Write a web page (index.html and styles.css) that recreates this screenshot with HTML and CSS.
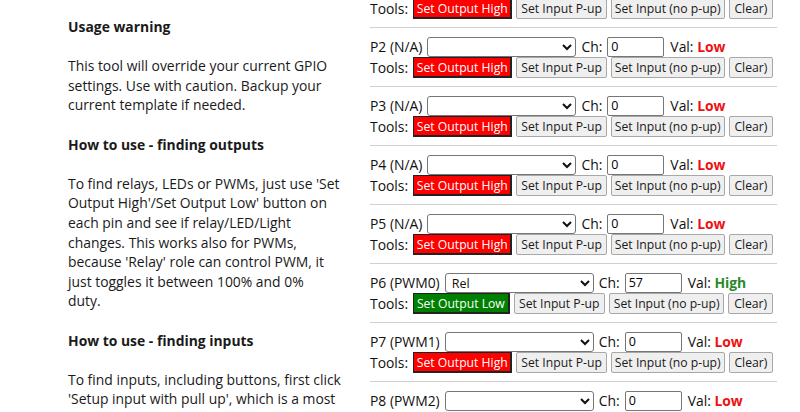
FILE: index.html
```html
<!DOCTYPE html>
<html>
<head>
<meta charset="utf-8">
<link rel="stylesheet" href="styles.css">
</head>
<body>
<div class="page">
  <div class="help">
    <p class="head">Usage warning</p>
    <p>This tool will override your current GPIO<br>settings. Use with caution. Backup your<br>current template if needed.</p>
    <p class="head">How to use - finding outputs</p>
    <p>To find relays, LEDs or PWMs, just use 'Set<br>Output High'/Set Output Low' button on<br>each pin and see if relay/LED/Light<br>changes. This works also for PWMs,<br>because 'Relay' role can control PWM, it<br>just toggles it between 100% and 0%<br>duty.</p>
    <p class="head">How to use - finding inputs</p>
    <p>To find inputs, including buttons, first click<br>'Setup input with pull up', which is a most</p>
  </div>
  <div class="pins">
    <div class="pin">
      <div class="line"><span>Tools:</span><button class="b-high">Set Output High</button><button class="b-pup">Set Input P-up</button><button class="b-nopup">Set Input (no p-up)</button><button class="b-clear">Clear)</button></div>
    </div>
    <div class="pin">
      <div class="line"><span>P2 (N/A)</span><select></select><span>Ch:</span><input type="text" value="0"><span>Val: <b class="low">Low</b></span></div>
      <div class="line"><span>Tools:</span><button class="b-high">Set Output High</button><button class="b-pup">Set Input P-up</button><button class="b-nopup">Set Input (no p-up)</button><button class="b-clear">Clear)</button></div>
    </div>
    <div class="pin">
      <div class="line"><span>P3 (N/A)</span><select></select><span>Ch:</span><input type="text" value="0"><span>Val: <b class="low">Low</b></span></div>
      <div class="line"><span>Tools:</span><button class="b-high">Set Output High</button><button class="b-pup">Set Input P-up</button><button class="b-nopup">Set Input (no p-up)</button><button class="b-clear">Clear)</button></div>
    </div>
    <div class="pin">
      <div class="line"><span>P4 (N/A)</span><select></select><span>Ch:</span><input type="text" value="0"><span>Val: <b class="low">Low</b></span></div>
      <div class="line"><span>Tools:</span><button class="b-high">Set Output High</button><button class="b-pup">Set Input P-up</button><button class="b-nopup">Set Input (no p-up)</button><button class="b-clear">Clear)</button></div>
    </div>
    <div class="pin">
      <div class="line"><span>P5 (N/A)</span><select></select><span>Ch:</span><input type="text" value="0"><span>Val: <b class="low">Low</b></span></div>
      <div class="line"><span>Tools:</span><button class="b-high">Set Output High</button><button class="b-pup">Set Input P-up</button><button class="b-nopup">Set Input (no p-up)</button><button class="b-clear">Clear)</button></div>
    </div>
    <div class="pin">
      <div class="line"><span>P6 (PWM0)</span><select><option>Rel</option></select><span>Ch:</span><input type="text" value="57"><span>Val: <b class="high">High</b></span></div>
      <div class="line"><span>Tools:</span><button class="b-low">Set Output Low</button><button class="b-pup">Set Input P-up</button><button class="b-nopup">Set Input (no p-up)</button><button class="b-clear">Clear)</button></div>
    </div>
    <div class="pin">
      <div class="line"><span>P7 (PWM1)</span><select></select><span>Ch:</span><input type="text" value="0"><span>Val: <b class="low">Low</b></span></div>
      <div class="line"><span>Tools:</span><button class="b-high">Set Output High</button><button class="b-pup">Set Input P-up</button><button class="b-nopup">Set Input (no p-up)</button><button class="b-clear">Clear)</button></div>
    </div>
    <div class="pin">
      <div class="line"><span>P8 (PWM2)</span><select></select><span>Ch:</span><input type="text" value="0"><span>Val: <b class="low">Low</b></span></div>
    </div>
  </div>
</div>
</body>
</html>
```
FILE: styles.css
```css
html, body {
  margin: 0;
  padding: 0;
  background: #fff;
  overflow: hidden;
}
body {
  font-family: "Open Sans", "Noto Sans", sans-serif;
  color: #111;
  font-size: 14px;
}
.page {
  display: flex;
  align-items: flex-start;
}
.help {
  width: 290px;
  flex-shrink: 0;
  margin-left: 68px;
  padding-top: 17px;
  font-size: 13.9px;
  line-height: 19.6px;
  color: #1a1a1a;
  white-space: nowrap;
}
.help p {
  margin: 0 0 19.6px 0;
}
.help .head {
  font-weight: bold;
}
.pins {
  margin-left: 12px;
  margin-top: -10px;
  width: 407px;
  flex-shrink: 0;
}
.pin {
  padding: 8px 0;
  border-bottom: 1px solid #d0d0d0;
}
.line {
  display: flex;
  align-items: center;
  height: 21px;
  font-size: 13.9px;
  white-space: nowrap;
}
.line > span {
  margin-right: 5px;
}
.line select {
  width: 149px;
  height: 20px;
  margin: 0 5px 0 0;
  font-family: inherit;
  font-size: 12.5px;
  padding: 0 0 0 2px;
  border: 1px solid #767676;
  border-radius: 3px;
  background: #fff;
  color: #111;
}
.line input {
  width: 57px;
  height: 20px;
  box-sizing: border-box;
  margin: 0 6px 0 0;
  font-family: inherit;
  font-size: 12.5px;
  padding: 0 3px;
  border: 1px solid #767676;
  border-radius: 2px;
}
.line b.low {
  color: #ee1111;
}
.line b.high {
  color: #2a8a2a;
}
.line button {
  height: 21px;
  box-sizing: border-box;
  margin: 0 4px 0 0;
  padding: 0;
  font-family: inherit;
  font-size: 12.2px;
  color: #1a1a1a;
  background: #efefef;
  border: 1px solid #a8a8a8;
  border-radius: 2px;
  text-align: center;
}
.b-high {
  width: 101px;
}
.b-low {
  width: 97px;
}
.line .b-high {
  background: #ff0000;
  color: #fff;
  border: 1px solid #222;
  border-width: 1px 2px 2px 1px;
  border-radius: 0;
}
.line .b-low {
  background: #008000;
  color: #fff;
  border: 1px solid #222;
  border-width: 1px 2px 2px 1px;
  border-radius: 0;
}
.b-pup {
  width: 92px;
}
.b-nopup {
  width: 116px;
}
.b-clear {
  width: 45px;
}
```
